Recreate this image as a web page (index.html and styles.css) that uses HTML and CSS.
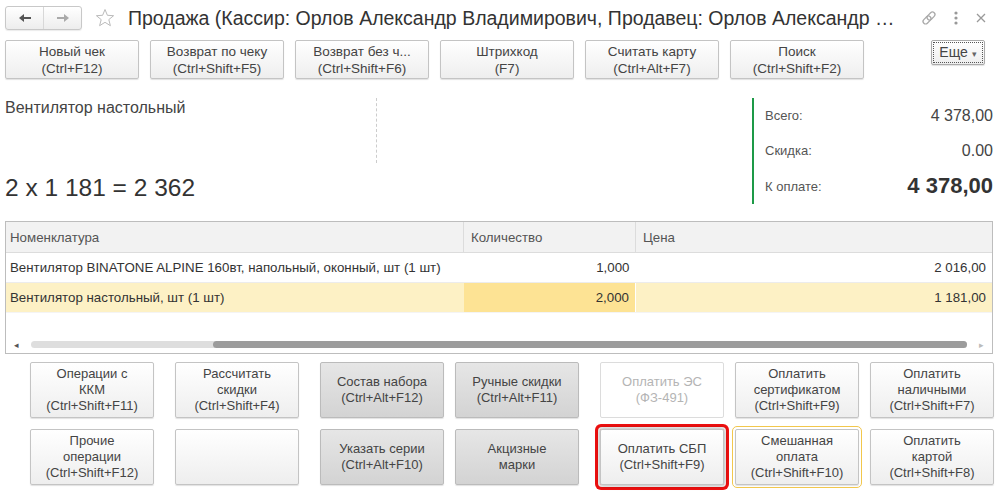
FILE: index.html
```html
<!DOCTYPE html>
<html lang="ru">
<head>
    <meta charset="UTF-8">
    <title>Продажа</title>
    <link rel="stylesheet" href="styles.css">
</head>
<body>
    <div class="titlebar">
        <div class="nav">
            <span class="nav-btn">
                <svg width="16" height="16" viewBox="0 0 16 16"><path d="M2 8 L7 4 V7 H14 V9 H7 V12 Z" fill="#555"/></svg>
            </span>
            <span class="nav-btn">
                <svg width="16" height="16" viewBox="0 0 16 16"><path d="M14 8 L9 4 V7 H2 V9 H9 V12 Z" fill="#aaa"/></svg>
            </span>
        </div>
        <svg class="star" width="20" height="20" viewBox="0 0 20 20">
            <polygon points="10,1.5 12.4,7.3 18.6,7.7 13.8,11.6 15.4,17.7 10,14.3 4.6,17.7 6.2,11.6 1.4,7.7 7.6,7.3" fill="none" stroke="#bbb" stroke-width="1"/>
        </svg>
        <div class="title">Продажа (Кассир: Орлов Александр Владимирович, Продавец: Орлов Александр …</div>
        <div class="win-icons">
            <svg width="18" height="18" viewBox="0 0 18 18">
                <g fill="none" stroke="#aaa" stroke-width="1.3">
                    <rect x="2.5" y="8.5" width="9" height="5" rx="2.5" transform="rotate(-45 7 11)"/>
                    <rect x="6.5" y="4.5" width="9" height="5" rx="2.5" transform="rotate(-45 11 7)"/>
                </g>
            </svg>
            <svg width="10" height="18" viewBox="0 0 10 18">
                <circle cx="5" cy="4" r="1.6" fill="#999"/>
                <circle cx="5" cy="9" r="1.6" fill="#999"/>
                <circle cx="5" cy="14" r="1.6" fill="#999"/>
            </svg>
            <svg width="14" height="18" viewBox="0 0 14 18">
                <path d="M3 5 L11 13 M11 5 L3 13" stroke="#999" stroke-width="1.3"/>
            </svg>
        </div>
    </div>

    <div class="toolbar">
        <button class="btn tb">Новый чек<br>(Ctrl+F12)</button>
        <button class="btn tb">Возврат по чеку<br>(Ctrl+Shift+F5)</button>
        <button class="btn tb">Возврат без ч...<br>(Ctrl+Shift+F6)</button>
        <button class="btn tb">Штрихкод<br>(F7)</button>
        <button class="btn tb">Считать карту<br>(Ctrl+Alt+F7)</button>
        <button class="btn tb">Поиск<br>(Ctrl+Shift+F2)</button>
        <button class="btn more">Еще <span class="caret">▾</span></button>
    </div>

    <div class="info">
        <div class="item">
            <div class="item-top">
                <div class="item-name">Вентилятор настольный</div>
            </div>
            <div class="item-sum">2 x 1 181 = 2 362</div>
        </div>
        <div class="totals">
            <div class="total-row"><span class="label">Всего:</span><span class="value">4 378,00</span></div>
            <div class="total-row"><span class="label">Скидка:</span><span class="value">0.00</span></div>
            <div class="total-row"><span class="label">К оплате:</span><span class="value big">4 378,00</span></div>
        </div>
    </div>

    <div class="grid">
        <table>
            <tr class="head">
                <th class="c-name">Номенклатура</th>
                <th class="c-qty">Количество</th>
                <th class="c-price">Цена</th>
            </tr>
            <tr>
                <td>Вентилятор BINATONE ALPINE 160вт, напольный, оконный, шт (1 шт)</td>
                <td class="num">1,000</td>
                <td class="num">2 016,00</td>
            </tr>
            <tr class="current">
                <td>Вентилятор настольный, шт (1 шт)</td>
                <td class="num active">2,000</td>
                <td class="num">1 181,00</td>
            </tr>
        </table>
        <div class="hscroll">
            <span class="arrow">◂</span>
            <div class="track"><div class="thumb"></div></div>
            <span class="arrow light">▸</span>
        </div>
    </div>

    <div class="pad">
        <div class="pad-row">
            <button class="btn big-btn">Операции с<br>ККМ<br>(Ctrl+Shift+F11)</button>
            <button class="btn big-btn sep">Рассчитать<br>скидки<br>(Ctrl+Shift+F4)</button>
            <button class="btn big-btn gray sep">Состав набора<br>(Ctrl+Alt+F12)</button>
            <button class="btn big-btn gray">Ручные скидки<br>(Ctrl+Alt+F11)</button>
            <button class="btn big-btn off sep">Оплатить ЭС<br>(ФЗ-491)</button>
            <button class="btn big-btn">Оплатить<br>сертификатом<br>(Ctrl+Shift+F9)</button>
            <button class="btn big-btn">Оплатить<br>наличными<br>(Ctrl+Shift+F7)</button>
        </div>
        <div class="pad-row">
            <button class="btn big-btn">Прочие<br>операции<br>(Ctrl+Shift+F12)</button>
            <button class="btn big-btn sep"></button>
            <button class="btn big-btn gray sep">Указать серии<br>(Ctrl+Alt+F10)</button>
            <button class="btn big-btn gray">Акцизные<br>марки</button>
            <button class="btn big-btn sep marked">Оплатить СБП<br>(Ctrl+Shift+F9)</button>
            <button class="btn big-btn focus">Смешанная<br>оплата<br>(Ctrl+Shift+F10)</button>
            <button class="btn big-btn">Оплатить<br>картой<br>(Ctrl+Shift+F8)</button>
        </div>
    </div>
</body>
</html>
```

FILE: styles.css
```css
body {
    margin: 0;
    background-color: white;
    font-family: "Liberation Sans", Arial, sans-serif;
    color: #333;
}
.titlebar {
    height: 36px;
    display: flex;
    align-items: center;
    padding: 0 5px;
}
.nav {
    display: flex;
    border: 1px solid #c8c8c8;
    border-radius: 3px;
    background: linear-gradient(#ffffff, #ededed);
    box-shadow: 0 1px 1px rgba(0, 0, 0, 0.08);
}
.nav-btn {
    width: 37px;
    height: 22px;
    display: flex;
    align-items: center;
    justify-content: center;
}
.nav-btn + .nav-btn {
    border-left: 1px solid #d8d8d8;
}
.star {
    margin-left: 13px;
}
.title {
    margin-left: 13px;
    flex: 1;
    font-size: 19.5px;
    color: #333;
    white-space: nowrap;
    overflow: hidden;
}
.win-icons {
    display: flex;
    align-items: center;
    gap: 13px;
    margin-right: 7px;
}
.btn {
    font-family: "Liberation Sans", Arial, sans-serif;
    font-size: 13px;
    line-height: 16px;
    color: #444;
    background: linear-gradient(#ffffff, #eeeeee);
    border: 1px solid #c4c4c4;
    border-radius: 2px;
    box-shadow: 0 1px 1px rgba(0, 0, 0, 0.12);
    padding: 0;
    text-align: center;
}
.toolbar {
    display: flex;
    align-items: flex-start;
    gap: 11px;
    padding: 4px 5px 0;
}
.tb {
    width: 134px;
    height: 39px;
    font-size: 13.5px;
    line-height: 17px;
}
.more {
    margin-left: auto;
    margin-right: 10px;
    width: 54px;
    height: 25px;
    font-size: 14px;
    border-color: #aaa;
    outline: 1px dotted #555;
    outline-offset: -3px;
}
.caret {
    font-size: 9px;
    color: #666;
}
.info {
    display: flex;
    padding: 19px 7px 0 5px;
    height: 106px;
}
.item {
    flex: 1;
    display: flex;
    flex-direction: column;
}
.item-top {
    height: 65px;
}
.item-name {
    width: 371px;
    height: 65px;
    border-right: 1px dashed #ccc;
    font-size: 16px;
    line-height: 20px;
    color: #444;
}
.item-sum {
    margin-top: auto;
    margin-bottom: 2px;
    font-size: 24.5px;
    line-height: 28px;
    color: #333;
}
.totals {
    width: 228px;
    border-left: 2px solid #1d9a47;
    padding-left: 11px;
    display: flex;
    flex-direction: column;
}
.total-row {
    flex: 1;
    display: flex;
    align-items: center;
    justify-content: space-between;
}
.label {
    font-size: 13px;
    color: #555;
}
.value {
    font-size: 16px;
    color: #444;
}
.value.big {
    font-size: 22px;
    font-weight: bold;
    color: #333;
}
.grid {
    margin: 17px 7px 0 5px;
    border: 1px solid #bdbdbd;
}
.grid table {
    width: 100%;
    border-collapse: collapse;
    font-size: 13.3px;
}
.grid th {
    background-color: #f2f2f2;
    font-weight: normal;
    color: #555;
    text-align: left;
    height: 30px;
    padding: 0 4px;
    border-bottom: 1px solid #dcdcdc;
}
.grid th + th {
    border-left: 1px solid #dcdcdc;
    padding-left: 7px;
}
.c-name {
    width: 449px;
}
.c-qty {
    width: 160px;
}
.grid td {
    height: 29px;
    padding: 0 4px;
    border-bottom: 1px solid #ececec;
    white-space: nowrap;
}
.grid td.num {
    text-align: right;
    padding-right: 6px;
}
.current td {
    background-color: #fdf1c5;
    border-bottom: 1px solid #f4f4f4;
}
.current td.active {
    background-color: #fde394;
    border-right: 1px solid #fff;
}
.hscroll {
    height: 37px;
    display: flex;
    align-items: flex-end;
    padding: 0 8px 3px;
    gap: 12px;
}
.arrow {
    font-size: 9px;
    color: #555;
    line-height: 10px;
}
.arrow.light {
    color: #bbb;
}
.track {
    flex: 1;
    height: 7px;
    margin-bottom: 2px;
    background-color: #dedede;
    border-radius: 4px;
    position: relative;
}
.thumb {
    position: absolute;
    left: 182px;
    right: 0;
    top: 0;
    bottom: 0;
    background-color: #9c9c9c;
    border-radius: 4px;
}
.pad {
    padding: 8px 0 14px 30px;
    display: flex;
    flex-direction: column;
    gap: 11px;
}
.pad-row {
    display: flex;
    gap: 11px;
}
.big-btn {
    width: 124px;
    height: 56px;
}
.big-btn.sep {
    margin-left: 10px;
}
.big-btn.gray {
    background: linear-gradient(#e6e6e6, #d3d3d3);
    border-color: #bbb;
}
.big-btn.off {
    color: #b4b4b4;
    border-color: #dcdcdc;
    background: #fff;
    box-shadow: none;
}
.big-btn.marked {
    box-shadow: 0 0 4px 1px rgba(0, 0, 0, 0.3), 0 0 0 2px #fff, 0 0 0 5px #f01010;
}
.big-btn.focus {
    outline: 1px solid #f2c74c;
    outline-offset: 2px;
}
```
